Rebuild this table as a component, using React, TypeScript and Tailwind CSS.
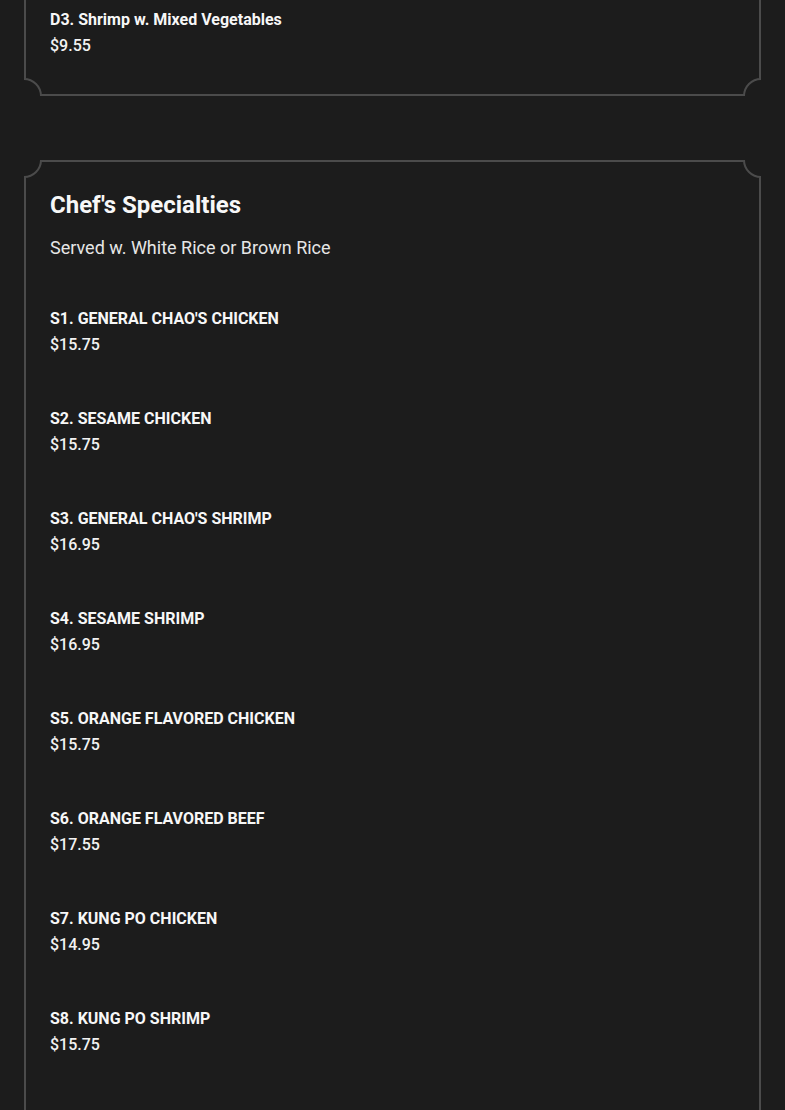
const specialties = [
  { name: "S1. GENERAL CHAO'S CHICKEN", price: '$15.75' },
  { name: 'S2. SESAME CHICKEN', price: '$15.75' },
  { name: "S3. GENERAL CHAO'S SHRIMP", price: '$16.95' },
  { name: 'S4. SESAME SHRIMP', price: '$16.95' },
  { name: 'S5. ORANGE FLAVORED CHICKEN', price: '$15.75' },
  { name: 'S6. ORANGE FLAVORED BEEF', price: '$17.55' },
  { name: 'S7. KUNG PO CHICKEN', price: '$14.95' },
  { name: 'S8. KUNG PO SHRIMP', price: '$15.75' },
  { name: 'S9. SZECHUAN CHICKEN', price: '$15.75' },
];

function MenuItem({ name, price }: { name: string; price: string }) {
  return (
    <div className="flex flex-col">
      <div className="text-[16px] leading-[26px] font-bold text-[#f7f7f7]">{name}</div>
      <div className="text-[16px] leading-[26px] font-medium text-[#f2f2f2]">{price}</div>
    </div>
  );
}

// card with scooped (inverted round) corners
function Card({ children, className = '' }: { children: React.ReactNode; className?: string }) {
  return (
    <div className={`relative shrink-0 overflow-hidden ${className}`}>
      <div className="pointer-events-none absolute inset-0 border-2 border-[#4b4b4b]" />
      <div className="absolute -top-[18px] -left-[18px] w-9 h-9 rounded-full border-2 border-[#4b4b4b] bg-[#1c1c1c]" />
      <div className="absolute -top-[18px] -right-[18px] w-9 h-9 rounded-full border-2 border-[#4b4b4b] bg-[#1c1c1c]" />
      <div className="absolute -bottom-[18px] -left-[18px] w-9 h-9 rounded-full border-2 border-[#4b4b4b] bg-[#1c1c1c]" />
      <div className="absolute -bottom-[18px] -right-[18px] w-9 h-9 rounded-full border-2 border-[#4b4b4b] bg-[#1c1c1c]" />
      <div className="relative flex flex-col px-[26px] pt-[27px] pb-[37px]">{children}</div>
    </div>
  );
}

export default function App() {
  return (
    <div
      className="h-[1110px] overflow-hidden bg-[#1c1c1c] px-6 flex flex-col gap-16"
      style={{ fontFamily: 'Roboto, "Liberation Sans", sans-serif' }}
    >
      <Card className="-mt-[20px]">
        <MenuItem name="D3. Shrimp w. Mixed Vegetables" price="$9.55" />
      </Card>

      <Card>
        <h2 className="text-[24px] leading-9 font-bold text-[#f7f7f7]">Chef's Specialties</h2>
        <p className="mt-[11px] text-[18px] leading-7 text-[#e6e6e6]">Served w. White Rice or Brown Rice</p>
        <div className="mt-[44px] flex flex-col gap-12">
          {specialties.map((item) => (
            <MenuItem key={item.name} name={item.name} price={item.price} />
          ))}
        </div>
      </Card>
    </div>
  );
}
